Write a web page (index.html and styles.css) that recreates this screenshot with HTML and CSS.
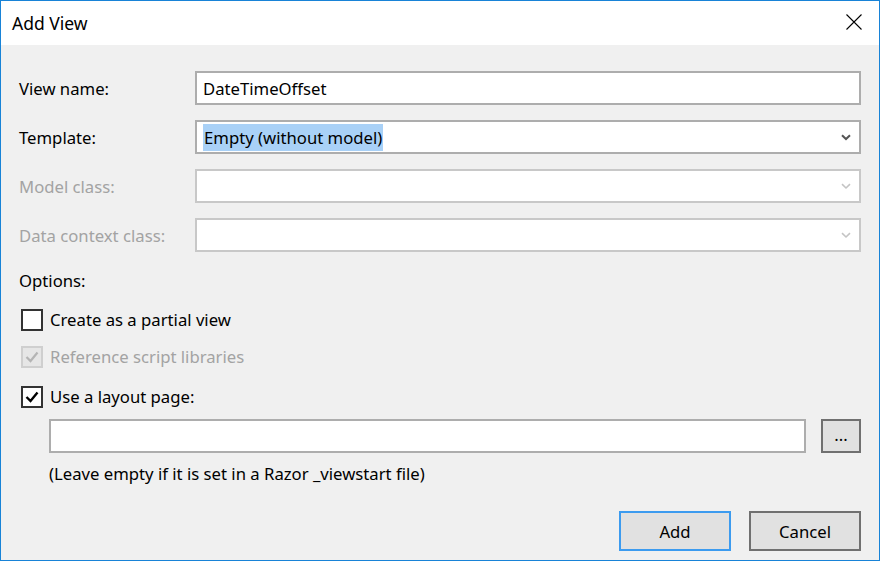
FILE: index.html
```html
<!DOCTYPE html>
<html>
<head>
<meta charset="utf-8">
<link rel="stylesheet" href="styles.css">
</head>
<body>
<div class="window">
  <div class="titlebar">
    <span class="title">Add View</span>
    <svg class="close" width="16" height="16" viewBox="0 0 16 16"><path d="M0.5 0.5 L15.5 15.5 M15.5 0.5 L0.5 15.5" stroke="#000" stroke-width="1.1" fill="none"/></svg>
  </div>
  <div class="content">
    <div class="form">
      <div class="label">View name:</div>
      <div class="field input"><span class="value">DateTimeOffset</span></div>

      <div class="label">Template:</div>
      <div class="field combo">
        <span class="value"><span class="sel">Empty (without model)</span></span>
        <svg class="chev" width="10" height="7" viewBox="0 0 10 7"><path d="M1 1.2 L5 5 L9 1.2" stroke="#555" stroke-width="2" fill="none"/></svg>
      </div>

      <div class="label disabled">Model class:</div>
      <div class="field combo off">
        <span class="value"></span>
        <svg class="chev" width="10" height="7" viewBox="0 0 10 7"><path d="M1 1.2 L5 5 L9 1.2" stroke="#c4c4c4" stroke-width="1.6" fill="none"/></svg>
      </div>

      <div class="label disabled">Data context class:</div>
      <div class="field combo off">
        <span class="value"></span>
        <svg class="chev" width="10" height="7" viewBox="0 0 10 7"><path d="M1 1.2 L5 5 L9 1.2" stroke="#c4c4c4" stroke-width="1.6" fill="none"/></svg>
      </div>
    </div>

    <div class="options-title">Options:</div>

    <div class="check-row r1">
      <span class="box"></span>
      <span class="ctext">Create as a partial view</span>
    </div>
    <div class="check-row r2 disabled">
      <span class="box dis">
        <svg width="18" height="18" viewBox="0 0 18 18"><path d="M3.5 9 L7.5 13 L14.5 4.5" stroke="#b4b4b4" stroke-width="2.2" fill="none"/></svg>
      </span>
      <span class="ctext">Reference script libraries</span>
    </div>
    <div class="check-row r3">
      <span class="box">
        <svg width="18" height="18" viewBox="0 0 18 18"><path d="M3.5 9 L7.5 13 L14.5 4.5" stroke="#000" stroke-width="2.4" fill="none"/></svg>
      </span>
      <span class="ctext">Use a layout page:</span>
    </div>

    <div class="layout-row">
      <div class="field input grow"></div>
      <div class="btn small">...</div>
    </div>
    <div class="note">(Leave empty if it is set in a Razor _viewstart file)</div>

    <div class="buttons">
      <div class="btn primary">Add</div>
      <div class="btn">Cancel</div>
    </div>
  </div>
</div>
</body>
</html>
```
FILE: styles.css
```css
* { box-sizing: border-box; }
html, body { margin: 0; padding: 0; }
body {
  font-family: "Noto Sans", "Open Sans", sans-serif;
  font-size: 16.7px;
  color: #000;
  background: #f0f0f0;
}
.window {
  width: 880px;
  height: 561px;
  border: 1px solid #1883d7;
  display: flex;
  flex-direction: column;
  background: #f0f0f0;
}
.titlebar {
  height: 44px;
  background: #fff;
  display: flex;
  align-items: center;
  justify-content: space-between;
  padding: 0 17px 0 11px;
  flex: none;
}
.title { font-size: 17.5px; margin-top: -1px; }
.close { margin-top: -2px; }
.content {
  flex: 1;
  padding: 26px 18px 0 18px;
  display: flex;
  flex-direction: column;
}
.form {
  display: grid;
  grid-template-columns: 176px 1fr;
  grid-auto-rows: 34px;
  row-gap: 15px;
  align-items: center;
}
.label { line-height: 22px; padding-top: 2px; }
.disabled { color: #a3a3a3; }
.field {
  height: 34px;
  background: #fff;
  border: 2px solid #adadad;
  display: flex;
  align-items: center;
}
.field.off { border-color: #c8c8c8; }
.value { padding-left: 6px; padding-top: 2px; flex: 1; line-height: 22px; }
.sel { background: #a9d1f7; padding: 2px 1px 2px 1px; }
.combo { padding-right: 8px; }
.chev { flex: none; margin-top: 1px; }
.options-title { margin-top: 18px; line-height: 22px; }
.check-row {
  display: flex;
  align-items: center;
  padding-left: 2px;
  height: 22px;
}
.r1 { margin-top: 17px; }
.r2 { margin-top: 15px; }
.r3 { margin-top: 18px; }
.box {
  width: 22px;
  height: 22px;
  border: 2px solid #333;
  background: #fff;
  margin-right: 7px;
  display: flex;
  align-items: center;
  justify-content: center;
  flex: none;
}
.box.dis { border-color: #cfcfcf; background: #e6e6e6; }
.ctext { line-height: 22px; }
.layout-row {
  display: flex;
  margin-top: 11px;
  padding-left: 30px;
  gap: 15px;
}
.grow { flex: 1; }
.btn {
  height: 40px;
  width: 112px;
  background: #e1e1e1;
  border: 2px solid #707070;
  display: flex;
  align-items: center;
  justify-content: center;
}
.btn.small { width: 40px; height: 34px; padding-bottom: 4px; }
.btn.primary { border-color: #3c9bef; }
.note { padding-left: 30px; margin-top: 10px; line-height: 22px; }
.buttons {
  display: flex;
  justify-content: flex-end;
  gap: 18px;
  margin-top: 26px;
}
```
